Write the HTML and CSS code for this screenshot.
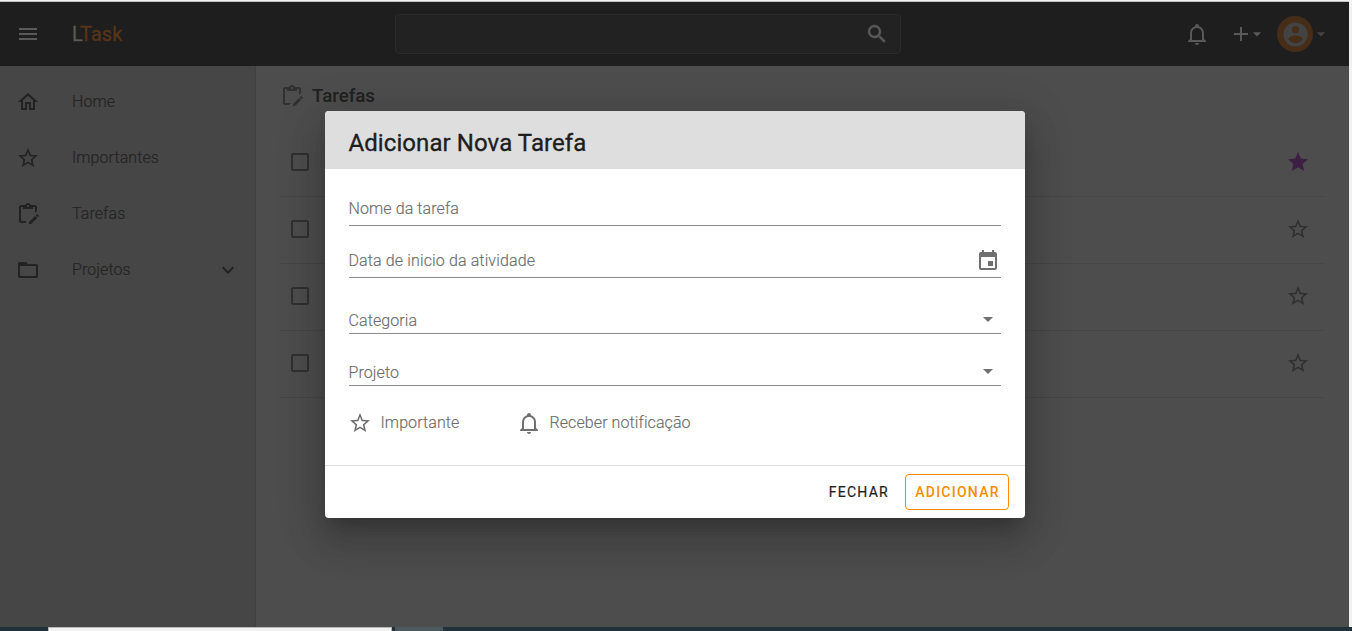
FILE: index.html
```html
<!DOCTYPE html>
<html lang="pt-BR">
<head>
<meta charset="utf-8">
<title>LTask</title>
<link rel="stylesheet" href="styles.css">
</head>
<body>
<svg class="defs" aria-hidden="true">
  <symbol id="menu" viewBox="0 0 24 24"><path d="M3,6H21V8H3V6M3,11H21V13H3V11M3,16H21V18H3V16Z"/></symbol>
  <symbol id="home" viewBox="0 0 24 24"><path d="M12 5.69L17 10.19V18H15V12H9V18H7V10.19L12 5.69M12 3L2 12H5V20H11V14H13V20H19V12H22"/></symbol>
  <symbol id="star-outline" viewBox="0 0 24 24"><path d="M12,15.39L8.24,17.66L9.23,13.38L5.91,10.5L10.29,10.13L12,6.09L13.71,10.13L18.09,10.5L14.77,13.38L15.76,17.66M22,9.24L14.81,8.63L12,2L9.19,8.63L2,9.24L7.45,13.97L5.82,21L12,17.27L18.18,21L16.54,13.97L22,9.24Z"/></symbol>
  <symbol id="star" viewBox="0 0 24 24"><path d="M12,17.27L18.18,21L16.54,13.97L22,9.24L14.81,8.62L12,2L9.19,8.62L2,9.24L7.45,13.97L5.82,21L12,17.27Z"/></symbol>
  <symbol id="clipboard" viewBox="0 0 24 24"><path d="M21.04 12.13C21.18 12.13 21.31 12.19 21.42 12.3L22.7 13.58C22.92 13.79 22.92 14.14 22.7 14.35L21.7 15.35L19.65 13.3L20.65 12.3C20.76 12.19 20.9 12.13 21.04 12.13M19.07 13.88L21.12 15.93L15.06 22H13V19.94L19.07 13.88M11 19L9 21H5C3.9 21 3 20.1 3 19V5C3 3.9 3.9 3 5 3H9.18C9.6 1.84 10.7 1 12 1S14.4 1.84 14.82 3H19C20.1 3 21 3.9 21 5V9L19 11V5H17V7H7V5H5V19H11M12 3C11.45 3 11 3.45 11 4S11.45 5 12 5 13 4.55 13 4 12.55 3 12 3Z"/></symbol>
  <symbol id="folder" viewBox="0 0 24 24"><path d="M20,18H4V8H20M20,6H12L10,4H4C2.89,4 2,4.89 2,6V18A2,2 0 0,0 4,20H20A2,2 0 0,0 22,18V8C22,6.89 21.1,6 20,6Z"/></symbol>
  <symbol id="chevron" viewBox="0 0 24 24"><path d="M7.41,8.58L12,13.17L16.59,8.58L18,10L12,16L6,10L7.41,8.58Z"/></symbol>
  <symbol id="caret" viewBox="0 0 24 24"><path d="M7,10L12,15L17,10H7Z"/></symbol>
  <symbol id="plus" viewBox="0 0 24 24"><path d="M19,13H13V19H11V13H5V11H11V5H13V11H19V13Z"/></symbol>
  <symbol id="bell" viewBox="0 0 24 24"><path d="M10 21H14C14 22.1 13.1 23 12 23S10 22.1 10 21M21 19V20H3V19L5 17V11C5 7.9 7 5.2 10 4.3V4C10 2.9 10.9 2 12 2S14 2.9 14 4V4.3C17 5.2 19 7.9 19 11V17L21 19M17 11C17 8.2 14.8 6 12 6S7 8.2 7 11V18H17V11Z"/></symbol>
  <symbol id="search" viewBox="0 0 24 24"><path stroke="currentColor" stroke-width=".5" d="M9.5,3A6.5,6.5 0 0,1 16,9.5C16,11.11 15.41,12.59 14.44,13.73L14.71,14H15.5L20.5,19L19,20.5L14,15.5V14.71L13.73,14.44C12.59,15.41 11.11,16 9.5,16A6.5,6.5 0 0,1 3,9.5A6.5,6.5 0 0,1 9.5,3M9.5,5C7,5 5,7 5,9.5C5,12 7,14 9.5,14C12,14 14,12 14,9.5C14,7 12,5 9.5,5Z"/></symbol>
  <symbol id="account" viewBox="0 0 24 24"><path d="M12,19.2C9.5,19.2 7.29,17.92 6,16C6.03,14 10,12.9 12,12.9C14,12.9 17.97,14 18,16C16.71,17.92 14.5,19.2 12,19.2M12,5A3,3 0 0,1 15,8A3,3 0 0,1 12,11A3,3 0 0,1 9,8A3,3 0 0,1 12,5M12,2A10,10 0 0,0 2,12A10,10 0 0,0 12,22A10,10 0 0,0 22,12C22,6.47 17.5,2 12,2Z"/></symbol>
  <symbol id="checkbox" viewBox="0 0 24 24"><path d="M19,3H5C3.89,3 3,3.89 3,5V19A2,2 0 0,0 5,21H19A2,2 0 0,0 21,19V5C21,3.89 20.1,3 19,3M19,5V19H5V5H19Z"/></symbol>
  <symbol id="calendar" viewBox="0 0 24 24"><path d="M19,19H5V8H19M16,1V3H8V1H6V3H5C3.89,3 3,3.89 3,5V19A2,2 0 0,0 5,21H19A2,2 0 0,0 21,19V5C21,3.89 20.1,3 19,3H18V1M17,12H12V17H17V12Z"/></symbol>
</svg>
<div class="screen">
  <div class="app">
    <header class="bar">
      <svg class="icon"><use href="#menu"/></svg>
      <div class="brand">L<span class="brand-accent">Task</span></div>
      <div class="search"><svg class="icon"><use href="#search"/></svg></div>
      <div class="actions">
        <svg class="icon"><use href="#bell"/></svg>
        <div class="add"><svg class="icon"><use href="#plus"/></svg><svg class="icon small"><use href="#caret"/></svg></div>
        <div class="user"><span class="avatar"><svg class="icon"><use href="#account"/></svg></span><svg class="icon small"><use href="#caret"/></svg></div>
      </div>
    </header>
    <div class="body">
      <nav class="sidebar">
        <a class="nav-item"><svg class="icon"><use href="#home"/></svg><span>Home</span></a>
        <a class="nav-item"><svg class="icon"><use href="#star-outline"/></svg><span>Importantes</span></a>
        <a class="nav-item"><svg class="icon"><use href="#clipboard"/></svg><span>Tarefas</span></a>
        <a class="nav-item"><svg class="icon"><use href="#folder"/></svg><span>Projetos</span><svg class="icon expand"><use href="#chevron"/></svg></a>
      </nav>
      <main class="content">
        <h1 class="page-title"><svg class="icon"><use href="#clipboard"/></svg>Tarefas</h1>
        <div class="list">
          <div class="row"><svg class="icon"><use href="#checkbox"/></svg><svg class="icon starred"><use href="#star"/></svg></div>
          <div class="row"><svg class="icon"><use href="#checkbox"/></svg><svg class="icon"><use href="#star-outline"/></svg></div>
          <div class="row"><svg class="icon"><use href="#checkbox"/></svg><svg class="icon"><use href="#star-outline"/></svg></div>
          <div class="row"><svg class="icon"><use href="#checkbox"/></svg><svg class="icon"><use href="#star-outline"/></svg></div>
        </div>
      </main>
    </div>
  </div>
  <div class="taskbar"><span class="task-window"></span><span class="task-button"></span></div>
  <div class="overlay">
    <section class="dialog">
      <h2 class="dialog-title">Adicionar Nova Tarefa</h2>
      <div class="form">
        <div class="field name">Nome da tarefa</div>
        <div class="field date">Data de inicio da atividade<svg class="icon"><use href="#calendar"/></svg></div>
        <div class="field category">Categoria<svg class="icon"><use href="#caret"/></svg></div>
        <div class="field project">Projeto<svg class="icon"><use href="#caret"/></svg></div>
        <div class="toggles">
          <div class="toggle important"><svg class="icon"><use href="#star-outline"/></svg><span>Importante</span></div>
          <div class="toggle"><svg class="icon"><use href="#bell"/></svg><span>Receber notificação</span></div>
        </div>
      </div>
      <footer class="dialog-actions">
        <button class="btn">Fechar</button>
        <button class="btn outlined">Adicionar</button>
      </footer>
    </section>
  </div>
</div>
</body>
</html>
```

FILE: styles.css
```css
* { box-sizing: border-box; }
body { margin: 0; font: 400 16px/24px Roboto, sans-serif; overflow: hidden; }
.defs { position: absolute; width: 0; height: 0; }
.icon { width: 24px; height: 24px; fill: currentColor; flex: none; display: block; }
.icon.small { width: 20px; height: 20px; }
.screen { position: relative; width: 1352px; height: 631px; overflow: hidden; background: #f1f1f1; display: flex; flex-direction: column; }
.app { width: 1349px; height: 627px; display: flex; flex-direction: column; }
.bar { margin-top: 2px; height: 64px; background: #1e1e1e; color: #595959; display: flex; align-items: center; padding: 0 14px 0 16px; box-shadow: 0 -1px 0 #bfc3c4; }
.brand { width: 355px; padding-left: 32px; font-size: 20px; font-weight: 400; -webkit-text-stroke: .3px; color: #595959; }
.brand-accent { color: #573518; }
.search { width: 506px; height: 40px; border: 1px solid #2b2b2b; border-radius: 4px; background: #222; display: flex; align-items: center; justify-content: flex-end; padding-right: 11px; }
.actions { margin-left: auto; display: flex; align-items: center; }
.add { display: flex; align-items: center; margin-left: 20px; }
.add .small { margin-left: -6px; }
.user { display: flex; align-items: center; margin-left: 10px; }
.user .small { margin-left: -2px; margin-right: 4px; color: #444; }
.avatar { width: 36px; height: 36px; border-radius: 50%; background: #452d18; color: #434343; display: flex; align-items: center; justify-content: center; }
.avatar .icon { width: 29px; height: 29px; }
.body { flex: 1; display: flex; }
.sidebar { width: 256px; background: #464646; border-right: 1px solid #414141; padding-top: 8px; }
.nav-item { height: 56px; display: flex; align-items: center; padding: 0 15px 0 16px; color: #222; font-weight: 300; letter-spacing: .08px; }
.nav-item span { margin-left: 32px; margin-top: -1px; color: #242424; -webkit-text-stroke: .2px; }
.expand { margin-left: auto; }
.content { flex: 1; background: #4d4d4d; padding: 18px 24px 0; }
.page-title { margin: 0; height: 24px; display: flex; align-items: center; gap: 8px; font-size: 18.7px; font-weight: 500; color: #202020; }
.page-title .icon { color: #303030; }
.list { margin-top: 22px; }
.row { height: 67px; border-bottom: 1px solid #464646; display: flex; align-items: center; justify-content: space-between; padding: 0 14.6px 2px 8px; color: #303030; }
.row .icon:last-child { margin-right: .4px; }
.row .starred { color: #3d1f44; }
.taskbar { height: 4px; background: #21313a; display: flex; padding-left: 48px; gap: 3px; }
.task-window { width: 344px; background: #f1f1f1; border: 1px solid #b8b8b8; border-bottom: 0; }
.task-button { width: 48px; background: #4c5a60; }
.overlay { position: absolute; inset: 0 0 4px 0; display: flex; justify-content: center; padding: 111px 2px 0 0; clip-path: inset(0 3px 0 0); }
.dialog { width: 700px; height: 407px; background: #fff; border-radius: 4px; overflow: hidden; color: #6c6c6c; box-shadow: 0 11px 15px -7px rgba(0,0,0,.2), 0 24px 38px 3px rgba(0,0,0,.14), 0 9px 46px 8px rgba(0,0,0,.12); }
.dialog-title { margin: 0; height: 58px; padding: 16px 23.5px 10px; background: #dedede; color: #1e1e1e; font-size: 24px; font-weight: 400; -webkit-text-stroke: .35px; letter-spacing: .08px; line-height: 32px; }
.form { height: 296px; padding: 16px 24px 0 23.5px; font-weight: 300; letter-spacing: .09px; -webkit-text-stroke: .15px; }
.field { border-bottom: 1px solid #8c8c8c; display: flex; justify-content: space-between; }
.name { height: 41px; padding-top: 12px; }
.date { height: 52px; padding-top: 23px; letter-spacing: .13px; }
.category { height: 56px; padding-top: 31px; }
.project { height: 52px; padding-top: 27px; }
.form .icon { color: #707070; }
.field .icon { margin-right: 1px; }
.category .icon, .project .icon { margin-top: -2px; }
.toggles { display: flex; padding-top: 25px; margin-left: -.5px; }
.toggle { display: flex; align-items: center; }
.toggle span { margin-left: 8.5px; margin-top: -1px; }
.important { width: 169px; }
.dialog-actions { height: 53px; border-top: 1px solid #dedede; display: flex; align-items: center; justify-content: flex-end; padding-right: 16px; gap: 7px; }
.btn { height: 36px; padding: 0 9px; border: 0; border-radius: 4px; background: transparent; color: #1e1e1e; font: 400 14px/20px Roboto, sans-serif; -webkit-text-stroke: .2px; letter-spacing: 1.25px; text-transform: uppercase; }
.outlined { width: 104px; padding: 0 0 0 1px; border: 1px solid #fb8c00; color: #fb8c00; font-weight: 500; -webkit-text-stroke: 0; }
```
